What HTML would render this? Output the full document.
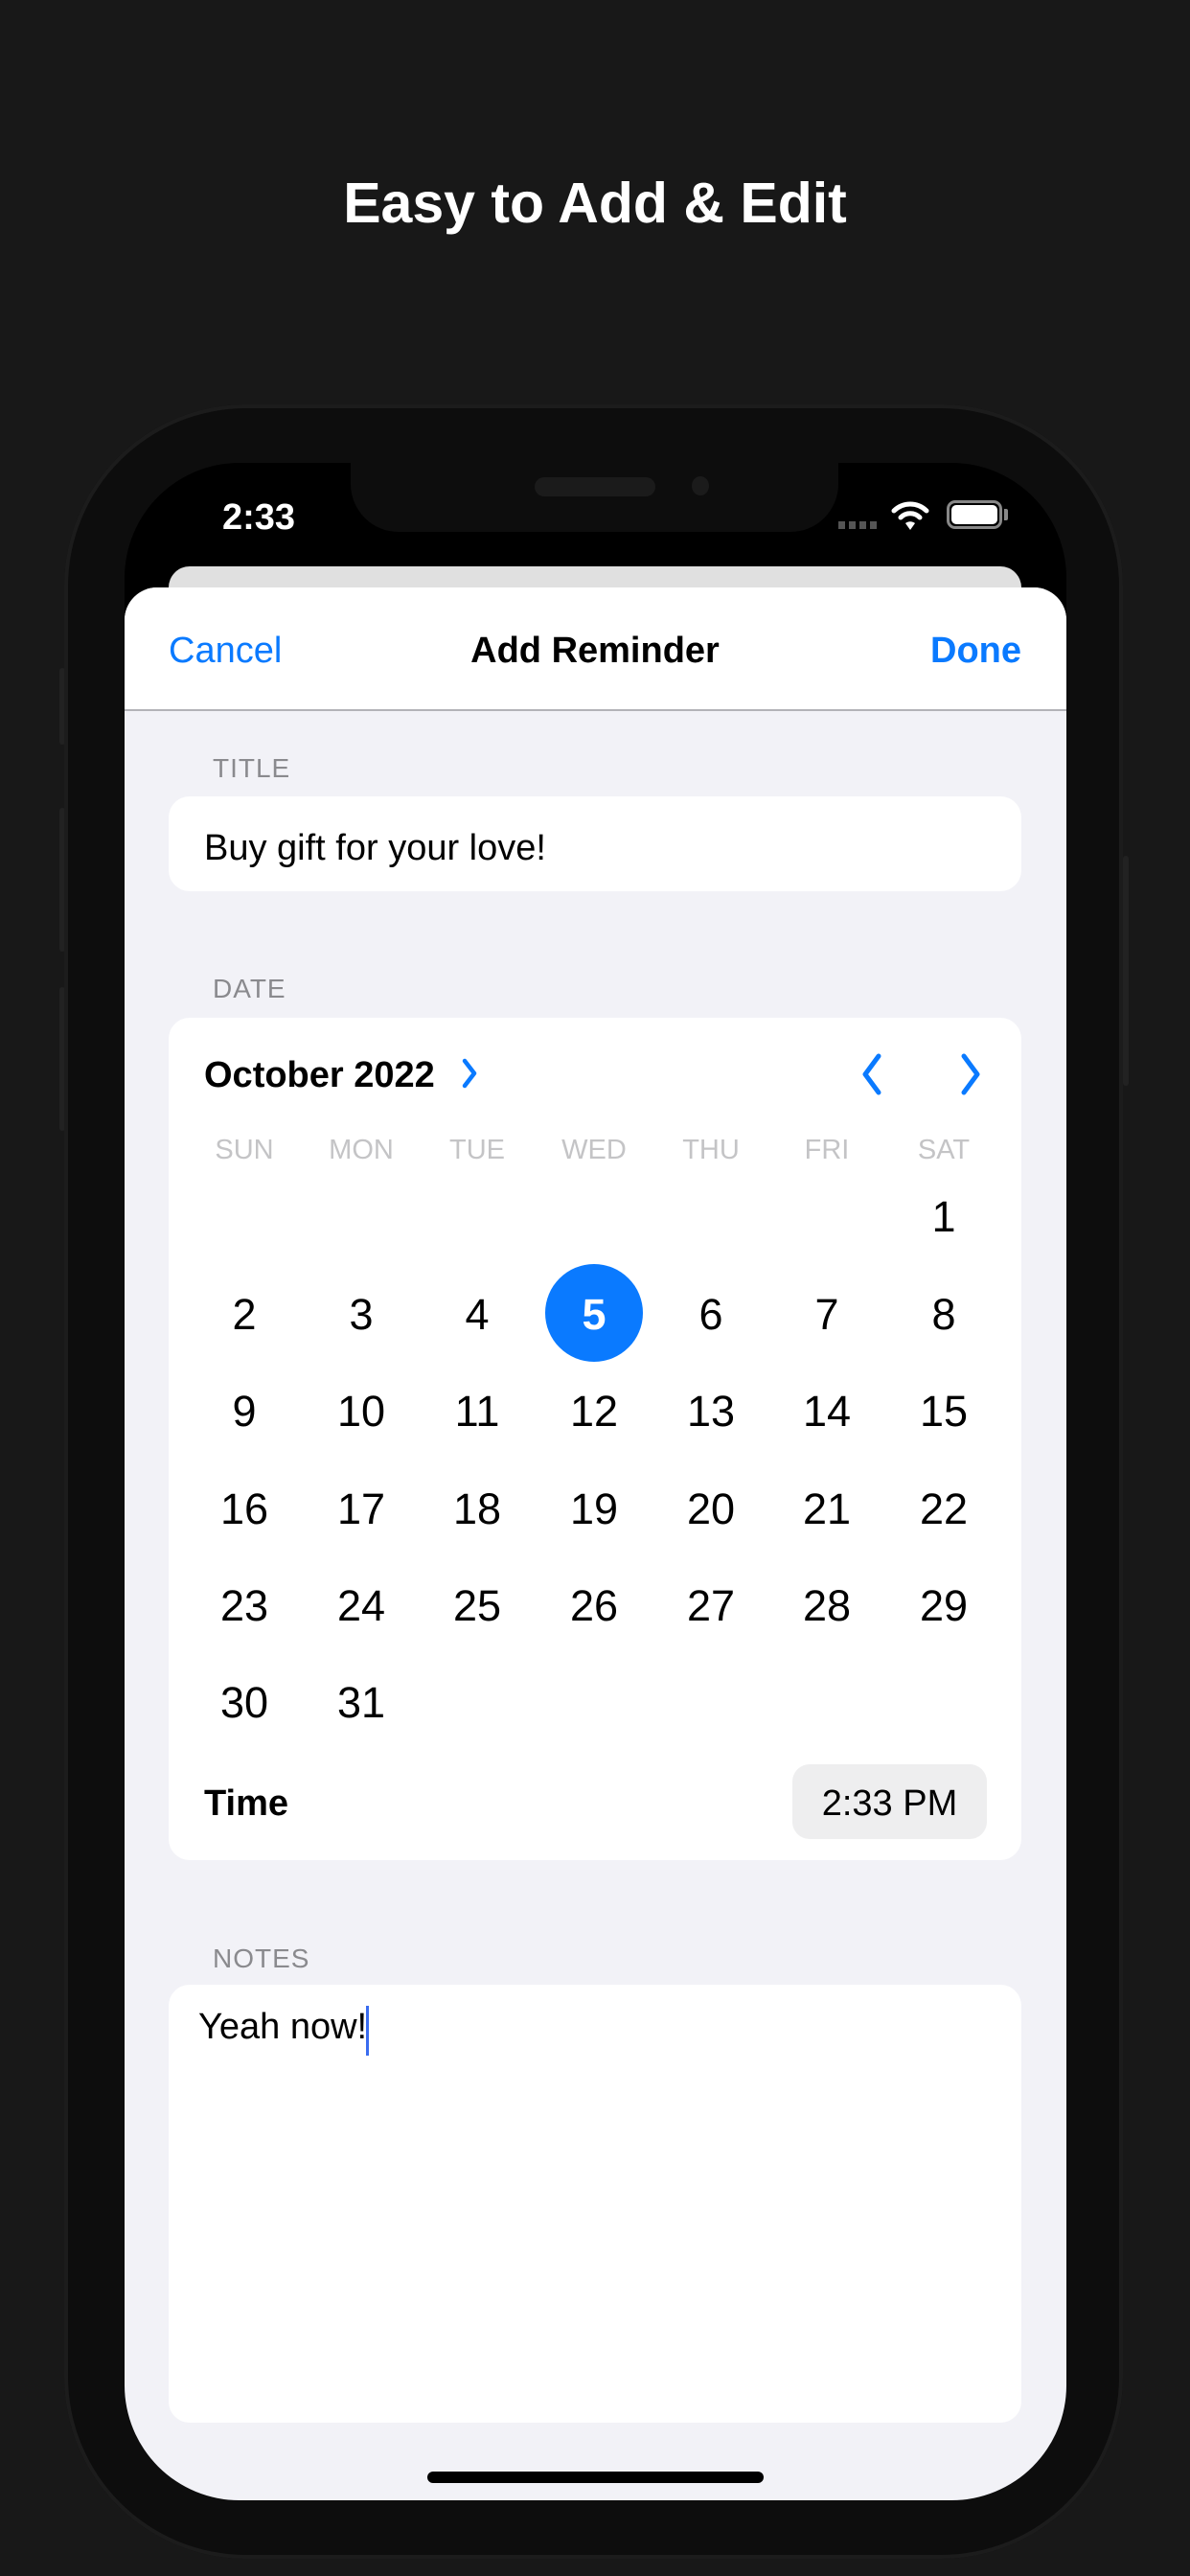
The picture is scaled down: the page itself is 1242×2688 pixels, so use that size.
<!DOCTYPE html>
<html><head><meta charset="utf-8"><style>
*{margin:0;padding:0;box-sizing:border-box}
body{width:1242px;height:2688px;background:#181818;position:relative;overflow:hidden;font-family:"Liberation Sans",sans-serif}
.a{position:absolute}
.t{white-space:nowrap}
.phone{left:67px;top:422px;width:1105px;height:2248px;border-radius:190px;background:#0d0d0d;box-shadow:inset 0 0 0 4px #1c1c1c}
.screen{left:130px;top:483px;width:983px;height:2126px;border-radius:120px;background:#000;overflow:hidden}
.lbl{font-size:28px;color:#8a8a8e;letter-spacing:1px}
.card{background:#fff;border-radius:22px;left:176px;width:890px}
.wd{font-size:29px;color:#c4c4c6;width:120px;text-align:center;margin-left:-60px}
.d{font-size:45px;color:#000;width:120px;text-align:center;margin-left:-60px;line-height:50px}
</style></head><body>
<div class="a t" style="left:0;width:1242px;top:178px;text-align:center;color:#fff;font-size:59px;font-weight:bold">Easy to Add &amp; Edit</div>
<div class="a" style="left:62px;top:697px;width:6px;height:80px;background:#222;border-radius:3px"></div>
<div class="a" style="left:62px;top:843px;width:6px;height:150px;background:#222;border-radius:3px"></div>
<div class="a" style="left:62px;top:1030px;width:6px;height:150px;background:#222;border-radius:3px"></div>
<div class="a" style="left:1172px;top:893px;width:6px;height:240px;background:#222;border-radius:3px"></div>
<div class="a phone"></div>
<div class="a screen">
</div>
<!-- notch -->
<div class="a" style="left:366px;top:470px;width:509px;height:85px;background:#0d0d0d;border-radius:0 0 50px 50px"></div>
<div class="a" style="left:558px;top:498px;width:126px;height:20px;background:#1b1b1b;border-radius:10px"></div>
<div class="a" style="left:722px;top:497px;width:18px;height:20px;background:#1b1b1b;border-radius:50%"></div>
<div class="a t" style="left:232px;top:519px;color:#fff;font-size:38px;font-weight:bold">2:33</div>
<div class="a" style="left:875px;top:544px;width:40px;height:8px;background:repeating-linear-gradient(90deg,#555 0 7px,transparent 7px 11px)"></div>
<svg class="a" style="left:930px;top:522px" width="40" height="32" viewBox="0 0 40 32"><path d="M3 11 A24 24 0 0 1 37 11" stroke="#fff" stroke-width="5" fill="none" stroke-linecap="round"/><path d="M10 18 A14 14 0 0 1 30 18" stroke="#fff" stroke-width="5" fill="none" stroke-linecap="round"/><path d="M15 24 L20 31 L25 24 A8 8 0 0 0 15 24Z" fill="#fff"/></svg>
<div class="a" style="left:988px;top:522px;width:58px;height:30px;border:3px solid #888;border-radius:9px;padding:2px"><div style="width:100%;height:100%;background:#fff;border-radius:5px"></div></div>
<div class="a" style="left:1048px;top:531px;width:4px;height:12px;background:#888;border-radius:0 2px 2px 0"></div>
<!-- sheets -->
<div class="a" style="left:176px;top:591px;width:890px;height:60px;background:#e0e0e0;border-radius:22px 22px 0 0"></div>
<div class="a" style="left:130px;top:613px;width:983px;height:1996px;background:#f2f2f7;border-radius:34px 34px 120px 120px;overflow:hidden">
 <div style="position:absolute;left:0;top:0;width:983px;height:129px;background:#fff;border-bottom:2px solid #b3b3b8"></div>
</div>
<div class="a t" style="left:176px;top:658px;font-size:38px;color:#0a7aff">Cancel</div>
<div class="a t" style="left:0;width:1242px;text-align:center;top:658px;font-size:38px;font-weight:bold;color:#000">Add Reminder</div>
<div class="a t" style="left:971px;top:658px;font-size:38px;font-weight:bold;color:#0a7aff">Done</div>

<div class="a t lbl" style="left:222px;top:786px">TITLE</div>
<div class="a card" style="top:831px;height:99px"><div class="a t" style="left:37px;top:33px;font-size:38px;color:#000">Buy gift for your love!</div></div>

<div class="a t lbl" style="left:222px;top:1016px">DATE</div>
<div class="a card" style="top:1062px;height:879px"></div>
<div class="a t" style="left:213px;top:1101px;font-size:38px;font-weight:bold;color:#000">October 2022</div>
<svg class="a" style="left:480px;top:1103px" width="20" height="34" viewBox="0 0 20 34"><path d="M5 4 L15 17 L5 30" stroke="#0a7aff" stroke-width="4.5" fill="none" stroke-linecap="round" stroke-linejoin="round"/></svg>
<svg class="a" style="left:895px;top:1098px" width="30" height="46" viewBox="0 0 30 46"><path d="M22 4 L8 23 L22 42" stroke="#0a7aff" stroke-width="5" fill="none" stroke-linecap="round" stroke-linejoin="round"/></svg>
<svg class="a" style="left:998px;top:1098px" width="30" height="46" viewBox="0 0 30 46"><path d="M8 4 L22 23 L8 42" stroke="#0a7aff" stroke-width="5" fill="none" stroke-linecap="round" stroke-linejoin="round"/></svg>

<div class="a t wd" style="left:255px;top:1184px">SUN</div>
<div class="a t wd" style="left:377px;top:1184px">MON</div>
<div class="a t wd" style="left:498px;top:1184px">TUE</div>
<div class="a t wd" style="left:620px;top:1184px">WED</div>
<div class="a t wd" style="left:742px;top:1184px">THU</div>
<div class="a t wd" style="left:863px;top:1184px">FRI</div>
<div class="a t wd" style="left:985px;top:1184px">SAT</div>

<div class="a" style="left:569px;top:1319px;width:102px;height:102px;border-radius:50%;background:#0a7aff"></div>

<div class="a d" style="left:985px;top:1245px">1</div>

<div class="a d" style="left:255px;top:1347px">2</div><div class="a d" style="left:377px;top:1347px">3</div><div class="a d" style="left:498px;top:1347px">4</div><div class="a d" style="left:620px;top:1347px;color:#fff;font-weight:bold">5</div><div class="a d" style="left:742px;top:1347px">6</div><div class="a d" style="left:863px;top:1347px">7</div><div class="a d" style="left:985px;top:1347px">8</div>

<div class="a d" style="left:255px;top:1448px">9</div><div class="a d" style="left:377px;top:1448px">10</div><div class="a d" style="left:498px;top:1448px">11</div><div class="a d" style="left:620px;top:1448px">12</div><div class="a d" style="left:742px;top:1448px">13</div><div class="a d" style="left:863px;top:1448px">14</div><div class="a d" style="left:985px;top:1448px">15</div>

<div class="a d" style="left:255px;top:1550px">16</div><div class="a d" style="left:377px;top:1550px">17</div><div class="a d" style="left:498px;top:1550px">18</div><div class="a d" style="left:620px;top:1550px">19</div><div class="a d" style="left:742px;top:1550px">20</div><div class="a d" style="left:863px;top:1550px">21</div><div class="a d" style="left:985px;top:1550px">22</div>

<div class="a d" style="left:255px;top:1651px">23</div><div class="a d" style="left:377px;top:1651px">24</div><div class="a d" style="left:498px;top:1651px">25</div><div class="a d" style="left:620px;top:1651px">26</div><div class="a d" style="left:742px;top:1651px">27</div><div class="a d" style="left:863px;top:1651px">28</div><div class="a d" style="left:985px;top:1651px">29</div>

<div class="a d" style="left:255px;top:1752px">30</div><div class="a d" style="left:377px;top:1752px">31</div>

<div class="a t" style="left:213px;top:1861px;font-size:38px;font-weight:bold;color:#000">Time</div>
<div class="a" style="left:827px;top:1841px;width:203px;height:78px;background:#eeeeef;border-radius:18px"></div>
<div class="a t" style="left:827px;width:203px;text-align:center;top:1861px;font-size:38px;color:#000">2:33 PM</div>

<div class="a t lbl" style="left:222px;top:2028px">NOTES</div>
<div class="a card" style="top:2071px;height:457px"></div>
<div class="a t" style="left:207px;top:2094px;font-size:38px;color:#000">Yeah now!</div>
<div class="a" style="left:382px;top:2093px;width:3px;height:52px;background:#3a6cf0"></div>

<div class="a" style="left:446px;top:2579px;width:351px;height:12px;background:#000;border-radius:6px"></div>
</body></html>
